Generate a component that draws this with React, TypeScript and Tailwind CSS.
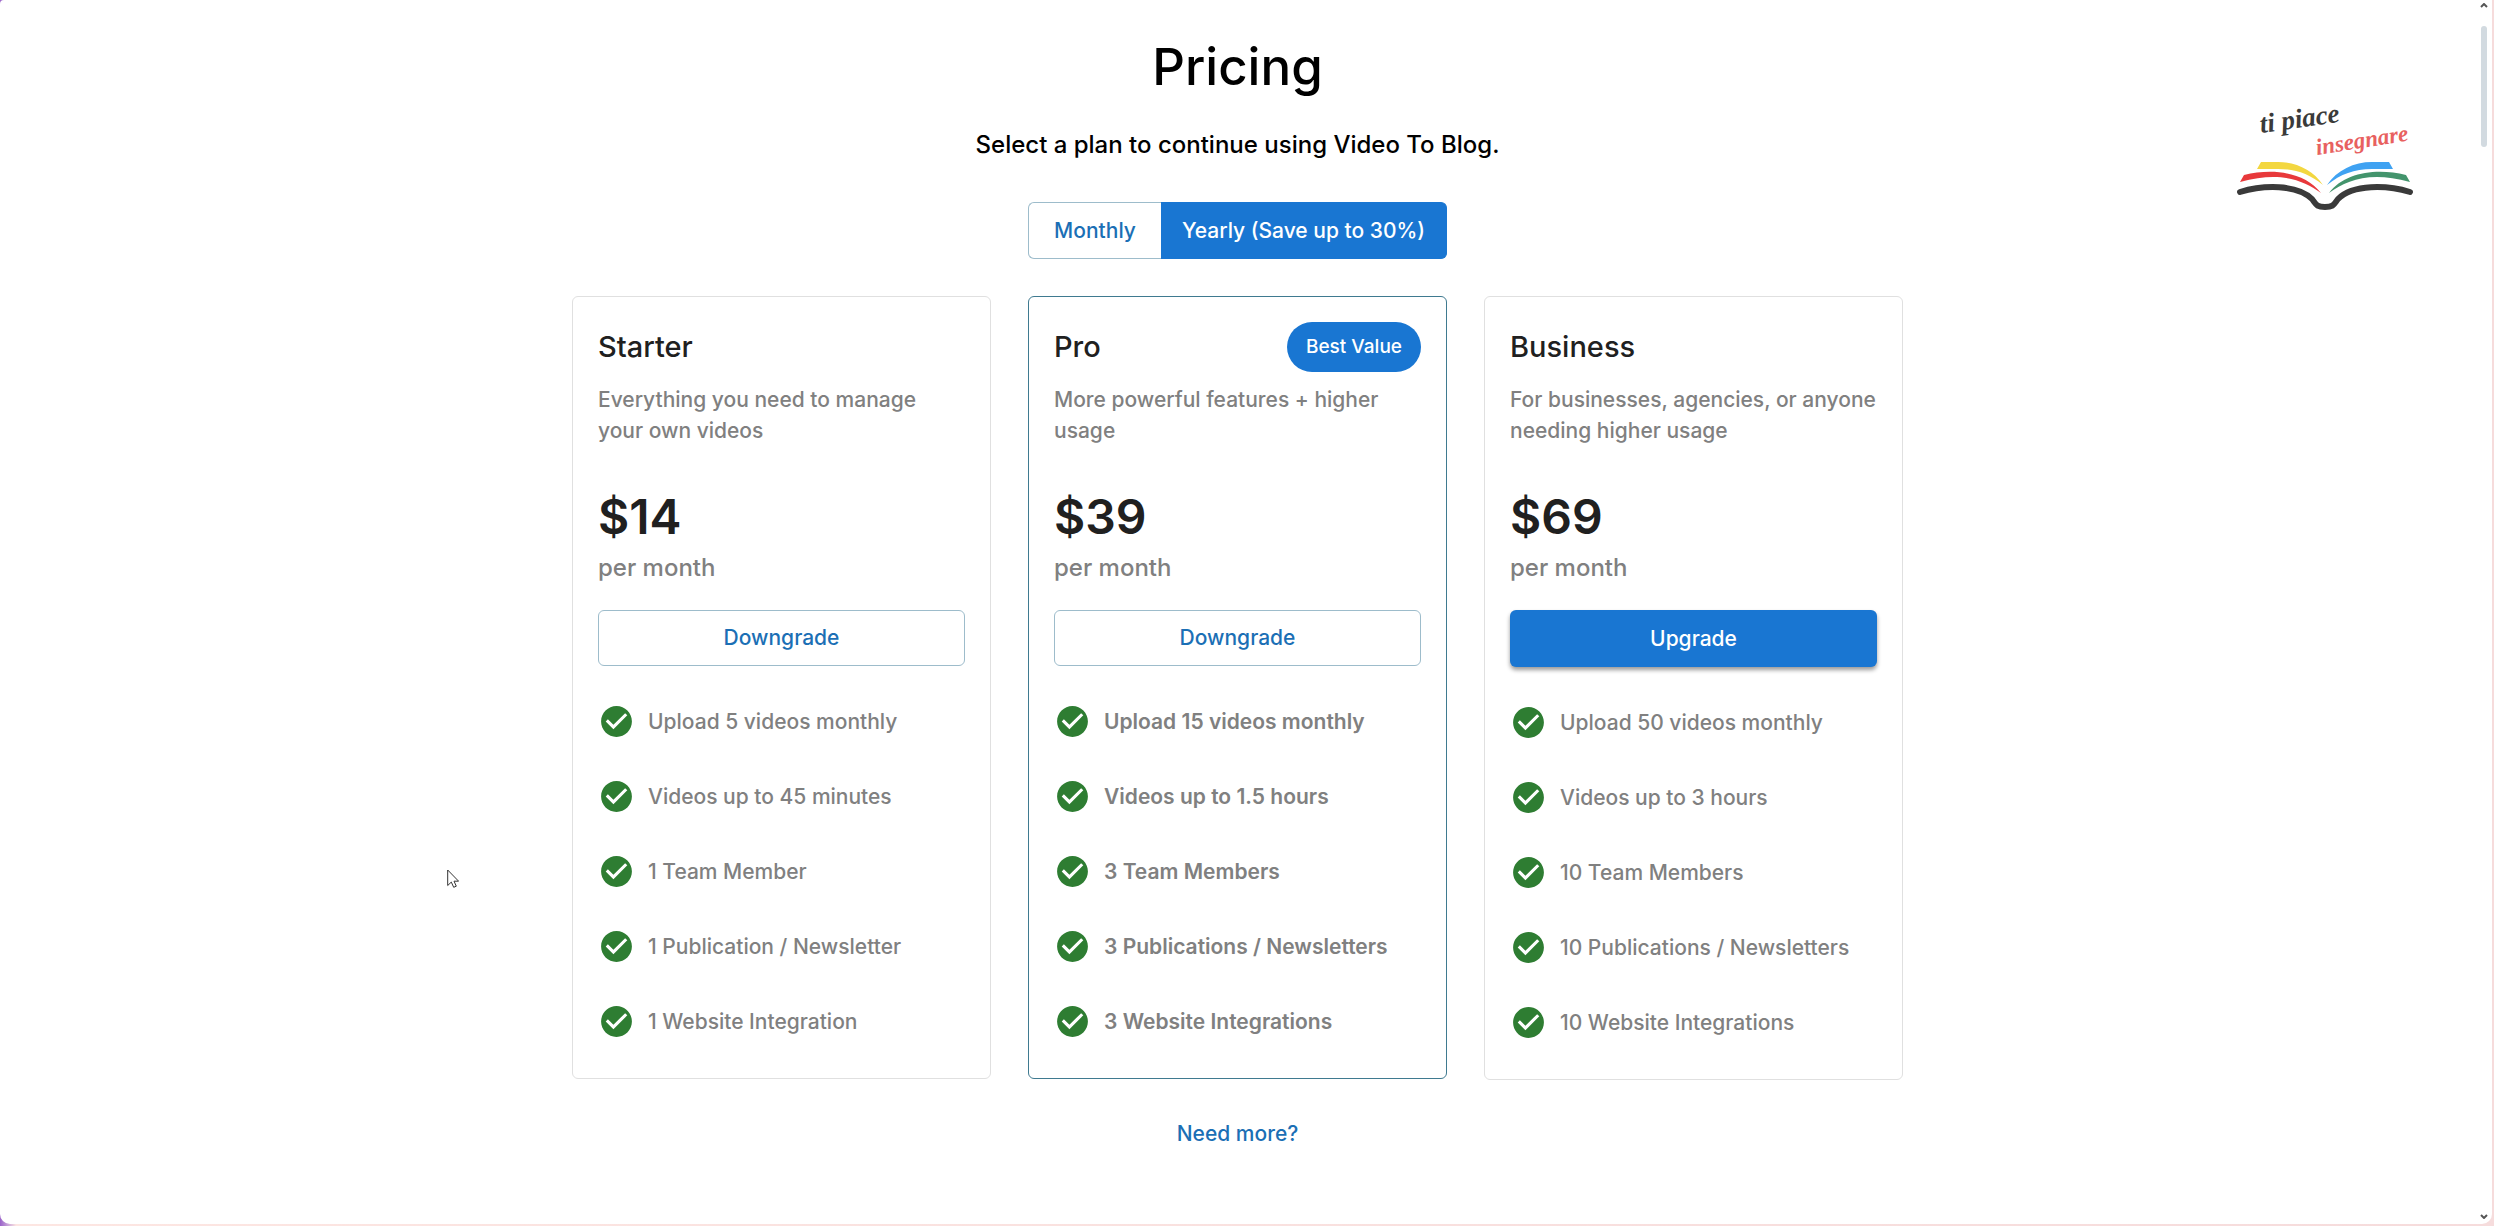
import { useState } from 'react';
import { MdCheckCircle } from 'react-icons/md';

interface Plan {
  name: string;
  blurb: string;
  price: string;
  action: 'Downgrade' | 'Upgrade';
  best?: boolean;
  features: string[];
}

const PLANS: Plan[] = [
  {
    name: 'Starter',
    blurb: 'Everything you need to manage\nyour own videos',
    price: '$14',
    action: 'Downgrade',
    features: [
      'Upload 5 videos monthly',
      'Videos up to 45 minutes',
      '1 Team Member',
      '1 Publication / Newsletter',
      '1 Website Integration',
    ],
  },
  {
    name: 'Pro',
    blurb: 'More powerful features + higher\nusage',
    price: '$39',
    action: 'Downgrade',
    best: true,
    features: [
      'Upload 15 videos monthly',
      'Videos up to 1.5 hours',
      '3 Team Members',
      '3 Publications / Newsletters',
      '3 Website Integrations',
    ],
  },
  {
    name: 'Business',
    blurb: 'For businesses, agencies, or anyone\nneeding higher usage',
    price: '$69',
    action: 'Upgrade',
    features: [
      'Upload 50 videos monthly',
      'Videos up to 3 hours',
      '10 Team Members',
      '10 Publications / Newsletters',
      '10 Website Integrations',
    ],
  },
];

const BUTTON: Record<Plan['action'], string> = {
  Downgrade: 'h-14 border border-[#9dbccb] text-[#1b6fb5]',
  Upgrade:   'h-[57px] bg-[#1976d2] text-white shadow-[0_3px_4px_rgba(0,0,0,0.4)]',
};

// ─── Plan card ────────────────────────────────────────────────────────────────
function PlanCard({ plan }: { plan: Plan }) {
  return (
    <section
      className={`rounded-md border px-[25px] pt-[25px] pb-[19px] ${
        plan.best ? 'border-[#3f7a90]' : 'border-[#e0e0e0]'
      }`}
    >
      <div className="flex h-[50px] items-center justify-between">
        <h2 className="text-[29px] leading-9 font-medium text-[#202020]">{plan.name}</h2>
        {plan.best && (
          <span className="flex h-[50px] items-center rounded-full bg-[#1976d2] px-[19px] text-[19px] font-medium text-white">
            Best Value
          </span>
        )}
      </div>
      <p className="mt-3 text-[21px] leading-[31px] font-medium whitespace-pre text-[#808080]">{plan.blurb}</p>

      <p className="mt-[43px] text-[48px] leading-[56px] font-semibold text-[#202020]">{plan.price}</p>
      <p className="mt-[5px] text-[24px] leading-9 font-medium text-[#808080]">per month</p>

      <button
        type="button"
        className={`mt-6 flex w-full items-center justify-center rounded-md text-[21px] font-medium ${BUTTON[plan.action]}`}
      >
        {plan.action}
      </button>

      <ul className="mt-[18px]">
        {plan.features.map((f) => (
          <li key={f} className="flex h-[75px] items-center gap-[13px]">
            <MdCheckCircle className="size-[37px] flex-shrink-0 text-[#2e7d32]" />
            <span
              className={`text-[21px] leading-8 whitespace-nowrap text-[#808080] ${
                plan.best ? 'font-semibold' : 'font-medium'
              }`}
            >
              {f}
            </span>
          </li>
        ))}
      </ul>
    </section>
  );
}

// ─── Channel watermark ────────────────────────────────────────────────────────
function Watermark() {
  return (
    <svg
      viewBox="0 0 240 150"
      role="img"
      aria-label="ti piace insegnare"
      className="absolute top-20 right-[52px] h-[150px] w-[240px] font-['Liberation_Serif',serif] font-bold italic"
    >
      <text x="61" y="53" fontSize="27" fill="#3a3a3a" transform="rotate(-8 61 53)">ti piace</text>
      <text x="117" y="75" fontSize="23" fill="#e8615f" transform="rotate(-9 117 75)">insegnare</text>
      <path d="M61 82h17c18 0 35 8 45 23-14-11-27-16-45-16H57z" fill="#f3d740" />
      <path d="M44 95c29-7 61-3 77 18-18-13-41-22-81-11z" fill="#e8393b" />
      <path d="M189 82h-17c-18 0-35 8-45 23 14-11 27-16 45-16h21z" fill="#3fa2f2" />
      <path d="M206 95c-29-7-61-3-77 18 18-13 41-22 81-11z" fill="#43946c" />
      <path
        d="M40 112c23-7 57-8 72 7 4 5 4 8 13 8s9-3 13-8c15-15 49-14 72-7"
        fill="none"
        stroke="#3a3a3a"
        strokeWidth="6"
        strokeLinecap="round"
        strokeLinejoin="round"
      />
    </svg>
  );
}

function Cursor() {
  return (
    <svg viewBox="0 0 12 19" className="absolute top-[869px] left-[447px] h-[19px] w-3">
      <path d="M.7 1v15.5l3.6-3.4 2.4 5.2 2.6-1.1-2.3-5h4.6z" fill="#fff" stroke="#333" strokeWidth="1" />
    </svg>
  );
}

function Scrollbar() {
  return (
    <div className="flex w-[17px] flex-col items-center justify-between pt-[3px] pb-[5px]" aria-hidden="true">
      <div className="flex flex-col items-center">
        <svg viewBox="0 0 8 5" className="h-[5px] w-2" fill="none" stroke="#555" strokeWidth="2">
          <path d="M1 4l3-3 3 3" />
        </svg>
        <div className="mt-[18px] h-[121px] w-1.5 rounded-sm bg-[#d2dae0]" />
      </div>
      <svg viewBox="0 0 8 5" className="h-[5px] w-2" fill="none" stroke="#555" strokeWidth="2">
        <path d="M1 1l3 3 3-3" />
      </svg>
    </div>
  );
}

export default function App() {
  const [yearly, setYearly] = useState(true);
  const on  = 'bg-[#1976d2] text-white border-[#1976d2]';
  const off = 'bg-white text-[#1b6fb5] border-[#9dbccb]';

  return (
    <div className="flex min-h-screen bg-linear-to-r from-[#9a63c9] via-[#fde6e2] via-[16px] to-[#f6dcdc] pr-0.5 pb-0.5 font-[Inter,sans-serif]">
      <div className="relative flex flex-1 rounded-tl-sm rounded-b-[10px] bg-white">
        <main className="flex flex-1 flex-col items-center px-6 pt-[37px] pb-16">
          <h1 className="text-[51px] leading-[60px] font-medium text-black">Pricing</h1>
          <p className="mt-[30px] text-[24px] leading-9 font-medium text-black">
            Select a plan to continue using Video To Blog.
          </p>

          <div role="group" aria-label="Billing period" className="mt-[39px] flex h-[57px] text-[21px] font-medium">
            <button
              type="button"
              aria-pressed={!yearly}
              onClick={() => setYearly(false)}
              className={`w-[133px] rounded-l-md border border-r-0 ${yearly ? off : on}`}
            >
              Monthly
            </button>
            <button
              type="button"
              aria-pressed={yearly}
              onClick={() => setYearly(true)}
              className={`w-[286px] rounded-r-md border border-l-0 ${yearly ? on : off}`}
            >
              Yearly (Save up to 30%)
            </button>
          </div>

          <div className="mt-[37px] grid w-full max-w-[1331px] grid-cols-3 items-start gap-[37px]">
            {PLANS.map((p) => <PlanCard key={p.name} plan={p} />)}
          </div>

          <a href="#more" className="mt-[38px] text-[21px] leading-8 font-medium text-[#1b6fb5]">
            Need more?
          </a>
        </main>
        <Scrollbar />
        <Watermark />
        <Cursor />
      </div>
    </div>
  );
}
